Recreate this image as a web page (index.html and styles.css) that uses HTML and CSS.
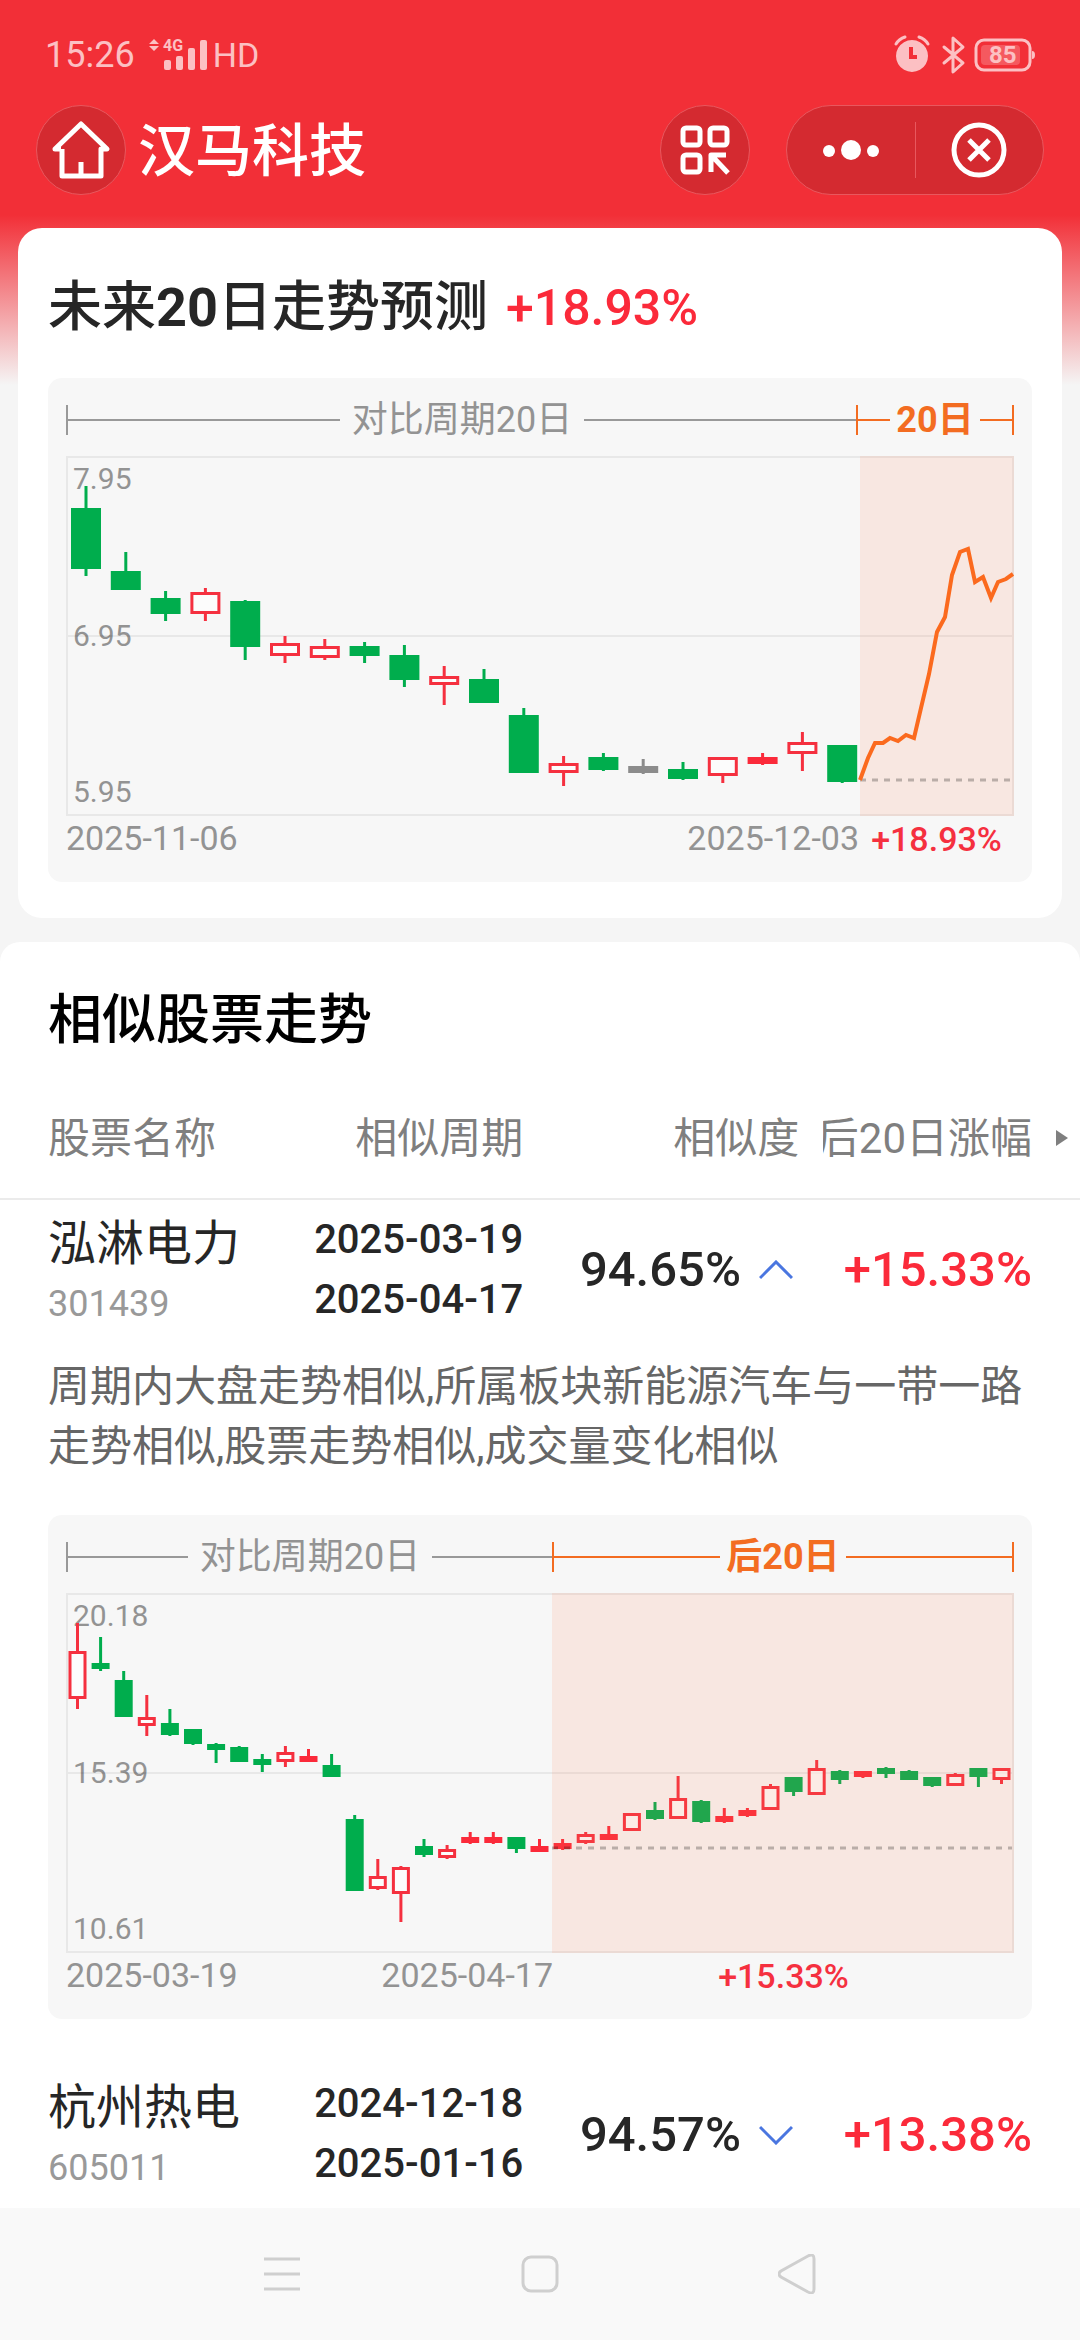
FILE: index.html
```html
<!DOCTYPE html>
<html lang="zh-CN">
  <head>
    <meta charset="UTF-8" />
    <meta name="viewport" content="width=device-width, initial-scale=1.0" />
    <title>汉马科技</title>
    <link rel="stylesheet" href="styles.css">
  </head>

  <body>
    <div class="status-bar">
      <span class="clock">15:26</span>
      <svg class="signal" width="60" height="42" viewBox="0 -4 60 42">
        <path d="M0 6 L5 1 L10 6 Z M0 8 H10 L5 13 Z" />
        <text x="14" y="13">4G</text>
        <rect x="15" y="22" width="7" height="10" rx="2" />
        <rect x="27" y="18" width="7" height="14" rx="2" />
        <rect x="39" y="10" width="7" height="22" rx="2" />
        <rect x="51" y="2" width="7" height="30" rx="2" />
      </svg>
      <span class="hd">HD</span>
      <svg class="status-icons" width="142" height="40" viewBox="0 0 142 40">
        <path fill-rule="evenodd" d="M18 5 a16 16 0 1 0 0.01 0 Z M15 12 H19 V20 H23 V24 H15 Z" />
        <path class="line" d="M2 9 Q5 4 11 2 M34 9 Q31 4 25 2" />
        <path class="line" d="M50 12 L69 28 L59 37 V3 L69 12 L50 28" />
        <rect class="line" x="82" y="5" width="54" height="30" rx="8" />
        <rect class="charge" x="87" y="10" width="39" height="20" rx="4" />
        <path d="M138 16 q3 0 3 4 q0 4 -3 4 Z" />
        <text x="95" y="28">85</text>
      </svg>
    </div>

    <header class="top-bar">
      <button class="round-button" aria-label="首页">
        <svg width="60" height="60" viewBox="0 0 60 60">
          <path d="M10 29 H4 L30 4 L56 29 H50 V56 H11 V29 M30 55 V42" />
        </svg>
      </button>
      <h1>汉马科技</h1>
      <button class="round-button scan" aria-label="扫码">
        <svg width="50" height="50" viewBox="0 0 50 50">
          <rect x="3" y="3" width="17" height="17" rx="3" />
          <rect x="30" y="3" width="17" height="17" rx="3" />
          <rect x="3" y="30" width="17" height="17" rx="3" />
          <path d="M31 47 V30 H46 M32 31 L48 48" />
        </svg>
      </button>
      <div class="capsule">
        <button aria-label="更多">
          <svg width="56" height="22" viewBox="0 0 56 22">
            <circle class="dot" cx="6" cy="12" r="6" />
            <circle class="dot" cx="28" cy="11" r="10" />
            <circle class="dot" cx="50" cy="12" r="6" />
          </svg>
        </button>
        <button aria-label="关闭">
          <svg width="56" height="56" viewBox="0 0 56 56">
            <circle cx="28" cy="28" r="25" />
            <path d="M18 18 L38 38 M38 18 L18 38" />
          </svg>
        </button>
      </div>
    </header>

    <main>
      <section class="card">
        <h2>
          <span>未来<b>20</b>日走势预测</span>
          <span class="rise">+18.93%</span>
        </h2>
        <div class="chart forecast">
          <div class="ranges">
            <div class="range before">对比周期20日</div>
            <div class="range after">20日</div>
          </div>
          <div class="plot">
            <div class="axis"><span>7.95</span><span>6.95</span><span>5.95</span></div>
            <svg id="forecast-plot" viewBox="0 0 948 360"></svg>
          </div>
          <div class="dates">
            <div class="before"><span>2025-11-06</span><span>2025-12-03</span></div>
            <div class="after">+18.93%</div>
          </div>
        </div>
      </section>

      <section class="similar">
        <h2>相似股票走势</h2>
        <table>
          <colgroup>
            <col class="col-name" />
            <col class="col-period" />
            <col class="col-score" />
            <col class="col-change" />
          </colgroup>
          <thead>
            <tr>
              <th>股票名称</th>
              <th>相似周期</th>
              <th>相似度</th>
              <th class="change-head">
                <div class="scroll-head">
                  <span class="clip"><span>后20日涨幅</span></span>
                  <i class="arrow"></i>
                </div>
              </th>
            </tr>
          </thead>
          <tbody>
            <tr class="stock">
              <td><div class="name">泓淋电力</div><div class="code">301439</div></td>
              <td class="period">2025-03-19<br />2025-04-17</td>
              <td class="score">
                94.65%
                <button class="toggle" aria-label="收起">
                  <svg width="34" height="20" viewBox="0 0 34 20"><path d="M1 18 L17 2 L33 18" /></svg>
                </button>
              </td>
              <td class="change rise">+15.33%</td>
            </tr>
            <tr>
              <td class="detail" colspan="4">
                <p>周期内大盘走势相似,所属板块新能源汽车与一带一路走势相似,股票走势相似,成交量变化相似</p>
                <div class="chart compare">
                  <div class="ranges">
                    <div class="range before">对比周期20日</div>
                    <div class="range after">后20日</div>
                  </div>
                  <div class="plot">
                    <div class="axis"><span>20.18</span><span>15.39</span><span>10.61</span></div>
                    <svg id="compare-plot" viewBox="0 0 948 360"></svg>
                  </div>
                  <div class="dates">
                    <div class="before"><span>2025-03-19</span><span>2025-04-17</span></div>
                    <div class="after">+15.33%</div>
                  </div>
                </div>
              </td>
            </tr>
            <tr class="stock">
              <td><div class="name">杭州热电</div><div class="code">605011</div></td>
              <td class="period">2024-12-18<br />2025-01-16</td>
              <td class="score">
                94.57%
                <button class="toggle" aria-label="展开">
                  <svg width="34" height="20" viewBox="0 0 34 20"><path d="M1 2 L17 18 L33 2" /></svg>
                </button>
              </td>
              <td class="change rise">+13.38%</td>
            </tr>
          </tbody>
        </table>
      </section>
    </main>

    <nav class="nav-bar">
      <button aria-label="菜单">
        <svg width="40" height="40" viewBox="0 0 40 40"><path d="M2 5 H38 M2 20 H38 M2 35 H38" /></svg>
      </button>
      <button aria-label="主屏幕">
        <svg width="40" height="40" viewBox="0 0 40 40"><rect x="3" y="3" width="34" height="34" rx="8" /></svg>
      </button>
      <button aria-label="返回">
        <svg width="40" height="40" viewBox="0 0 40 40">
          <path d="M30 2 Q36 -1 36 5 V35 Q36 41 30 38 L3 23 Q-1 20 3 17 Z" />
        </svg>
      </button>
    </nav>

    <script src="charts.js"></script>
  </body>
</html>
```

FILE: styles.css
```css
* {
  box-sizing: border-box;
}

body {
  margin: 0;
  height: 100vh;
  display: flex;
  flex-direction: column;
  overflow: hidden;
  font-family: Roboto, "Noto Sans CJK SC", sans-serif;
  color: #262626;
  background: linear-gradient(#f22f37 215px, #f5f5f5 385px);
}

h1,
h2,
p {
  margin: 0;
  font-weight: 500;
}

button {
  display: flex;
  align-items: center;
  justify-content: center;
  padding: 0;
  border: none;
  background: none;
  cursor: pointer;
}

svg {
  display: block;
}

.rise {
  color: #fb2a3a;
}

/* status bar */
.status-bar {
  display: flex;
  align-items: center;
  height: 105px;
  padding: 5px 44px 0 45px;
  font-size: 36px;
  color: #fcc0c3;
}

.status-bar svg {
  fill: #fcc0c3;
  overflow: visible;
}

.signal {
  margin-left: 14px;
}

.signal text {
  font-size: 16px;
  font-weight: 700;
}

.hd {
  margin-left: 4px;
  font-size: 34px;
}

.status-icons {
  margin-left: auto;
}

.status-icons .line {
  fill: none;
  stroke: #fcc0c3;
  stroke-width: 3;
  stroke-linejoin: round;
  stroke-linecap: round;
}

.status-icons .charge {
  fill: #f5595f;
}

.status-icons text {
  font-size: 24px;
  font-weight: 700;
}

/* title bar */
.top-bar {
  display: flex;
  align-items: center;
  height: 90px;
  margin-bottom: 33px;
  padding: 0 36px;
}

.top-bar h1 {
  margin-left: 12px;
  padding-top: 4px;
  font-size: 57px;
  line-height: 64px;
  color: #fff;
}

.top-bar svg {
  fill: none;
  stroke: #fff;
  stroke-width: 5;
  stroke-linejoin: round;
}

.top-bar .dot {
  fill: #fff;
  stroke: none;
}

.round-button {
  width: 90px;
  height: 90px;
  border: 1px solid #e8585e;
  border-radius: 50%;
  background: #d42a30;
}

.scan {
  margin-left: auto;
}

.capsule {
  display: flex;
  align-items: center;
  width: 258px;
  height: 90px;
  margin-left: 36px;
  border: 1px solid #e8585e;
  border-radius: 45px;
  background: #d42a30;
}

.capsule button {
  flex: 1;
  height: 56px;
}

.capsule button + button {
  border-left: 1px solid #e8585e;
}

main {
  flex: 1;
  min-height: 0;
  display: flex;
  flex-direction: column;
  overflow: hidden;
}

/* forecast card */
.card {
  margin: 0 18px 24px;
  padding: 48px 30px 36px;
  border-radius: 24px;
  background: #fff;
}

.card h2 {
  display: flex;
  align-items: center;
  gap: 18px;
  margin-bottom: 38px;
  font-size: 54px;
  line-height: 64px;
}

.card h2 .rise {
  font-size: 50px;
}

/* charts */
.chart {
  padding: 27px 18px 24px;
  border-radius: 14px;
  background: #f7f7f7;
  font-size: 34px;
  color: #939393;
}

.ranges {
  display: flex;
  height: 30px;
  margin-bottom: 21px;
  font-size: 36px;
  line-height: 30px;
}

.before {
  flex: 793;
}

.after {
  flex: 155;
}

.compare .before {
  flex: 487;
}

.compare .after {
  flex: 461;
}

.range {
  display: flex;
  align-items: center;
  gap: 12px;
  white-space: nowrap;
  border-left: 2px solid #999;
}

.range::before,
.range::after {
  content: "";
  flex: 1;
  height: 2px;
  background: #999;
}

.range.after {
  gap: 6px;
  font-weight: 700;
  color: #f36c21;
  border-left: 2px solid #f36c21;
  border-right: 2px solid #f36c21;
}

.range.after::before,
.range.after::after {
  background: #f36c21;
}

.plot {
  position: relative;
}

.plot svg {
  position: relative;
  width: 100%;
}

.axis {
  position: absolute;
  inset: 5px auto 6px 7px;
  display: flex;
  flex-direction: column;
  justify-content: space-between;
  font-size: 30px;
  line-height: 36px;
}

.grid {
  fill: none;
  stroke: #000;
  stroke-opacity: 0.06;
  stroke-width: 2;
}

.down {
  fill: #00ad4d;
  stroke: #00ad4d;
}

.up {
  fill: #fff;
  fill-opacity: 0.6;
  stroke: #f5303f;
}

.thin {
  fill: #fb2a3a;
  stroke: #fb2a3a;
}

.flat {
  fill: #8c8c8c;
  stroke: #8c8c8c;
}

.candle {
  stroke-width: 3;
}

.area {
  fill: #ff7f4c;
  fill-opacity: 0.13;
}

.base {
  stroke: #000;
  stroke-opacity: 0.25;
  stroke-width: 3;
  stroke-dasharray: 6 6;
}

.trend {
  fill: none;
  stroke: #fb6a1e;
  stroke-width: 4;
}

.dates {
  display: flex;
  height: 42px;
  line-height: 44px;
}

.dates .before {
  display: flex;
  justify-content: space-between;
}

.dates .after {
  text-align: center;
  line-height: 46px;
  font-weight: 500;
  color: #f5303f;
}

/* similar stocks */
.similar {
  flex: 1;
  padding-top: 49px;
  border-radius: 20px 20px 0 0;
  background: #fff;
}

.similar h2 {
  margin-bottom: 24px;
  padding-left: 48px;
  font-size: 54px;
  line-height: 60px;
  color: #000;
}

table {
  width: 100%;
  table-layout: fixed;
  border-collapse: collapse;
}

.col-name {
  width: 28%;
}

.col-period {
  width: 21%;
}

.col-score {
  width: 25%;
}

.col-change {
  width: 26%;
}

th,
td {
  padding: 0;
  text-align: right;
}

th:first-child,
td:first-child {
  padding-left: 48px;
  text-align: left;
}

th {
  height: 124px;
  padding-bottom: 4px;
  border-bottom: 2px solid #ebebeb;
  font-size: 42px;
  font-weight: 400;
  color: #7f7f7f;
  white-space: nowrap;
}

th:nth-child(2),
.period {
  padding-right: 6px;
}

.scroll-head {
  display: flex;
  align-items: center;
  gap: 24px;
  padding: 0 12px 0 24px;
}

.clip {
  flex: 1;
  min-width: 0;
  display: flex;
  justify-content: flex-end;
  overflow: hidden;
}

.arrow {
  margin-top: 6px;
  border-left: 12px solid #7f7f7f;
  border-top: 8px solid transparent;
  border-bottom: 8px solid transparent;
}

.stock td {
  height: 140px;
}

.name {
  padding-top: 4px;
  font-size: 48px;
  line-height: 64px;
}

.code {
  font-size: 36px;
  line-height: 56px;
  color: #999;
}

.period {
  font-size: 40px;
  font-weight: 500;
  line-height: 60px;
}

.score,
.change {
  font-size: 49px;
  font-weight: 500;
  white-space: nowrap;
}

.score {
  padding-right: 6px;
}

.stock .change {
  padding-right: 48px;
}

.toggle {
  display: inline-flex;
  margin-left: 6px;
  height: 40px;
  padding-bottom: 6px;
  vertical-align: middle;
}

.toggle path {
  fill: none;
  stroke: #4a76e0;
  stroke-width: 3;
}

.stock + tr .detail {
  padding: 18px 48px 45px;
}

.detail p {
  margin-bottom: 38px;
  font-size: 42px;
  font-weight: 400;
  line-height: 60px;
  color: #666;
}

/* system navigation */
.nav-bar {
  display: flex;
  align-items: center;
  justify-content: space-around;
  height: 132px;
  padding: 0 153px;
  background: #f9f9f9;
}

.nav-bar svg {
  fill: none;
  stroke: #cfcfcf;
  stroke-width: 3;
}
```

FILE: charts.js
```js
// each candle: [high, body top, body bottom, low, kind]
const forecast = [
  [30, 52, 113, 120, "down"],
  [96, 115, 134, 134, "down"],
  [135, 142, 158, 165, "down"],
  [132, 136, 158, 165, "up"],
  [144, 145, 191, 204, "down"],
  [180, 187, 200, 207, "up"],
  [183, 190, 202, 204, "up"],
  [186, 190, 200, 207, "down"],
  [189, 199, 224, 231, "down"],
  [210, 220, 229, 249, "up"],
  [213, 223, 247, 247, "down"],
  [252, 259, 317, 317, "down"],
  [300, 307, 317, 330, "up"],
  [297, 301, 314, 315, "down"],
  [303, 310, 317, 318, "flat"],
  [306, 313, 323, 324, "down"],
  [301, 301, 320, 327, "up"],
  [297, 301, 308, 309, "thin"],
  [276, 286, 298, 315, "up"],
  [289, 289, 326, 327, "down"],
];

const compare = [
  [30, 58, 106, 116, "up"],
  [44, 70, 76, 78, "down"],
  [78, 87, 124, 124, "down"],
  [102, 124, 133, 143, "up"],
  [116, 130, 142, 143, "down"],
  [136, 136, 151, 152, "down"],
  [150, 151, 157, 170, "down"],
  [153, 154, 169, 169, "down"],
  [161, 166, 172, 179, "down"],
  [153, 159, 169, 174, "up"],
  [156, 163, 169, 169, "thin"],
  [161, 172, 184, 184, "down"],
  [222, 226, 298, 298, "down"],
  [266, 283, 296, 297, "up"],
  [273, 274, 301, 329, "up"],
  [246, 253, 262, 264, "down"],
  [252, 256, 265, 266, "up"],
  [239, 244, 250, 251, "thin"],
  [239, 244, 250, 251, "thin"],
  [244, 244, 256, 260, "down"],
  [246, 253, 259, 259, "thin"],
  [246, 250, 256, 257, "thin"],
  [239, 241, 250, 251, "up"],
  [233, 241, 247, 247, "thin"],
  [220, 220, 238, 238, "up"],
  [209, 217, 226, 227, "down"],
  [183, 205, 226, 226, "up"],
  [207, 208, 229, 230, "down"],
  [215, 223, 229, 230, "thin"],
  [215, 217, 223, 224, "thin"],
  [191, 193, 217, 217, "up"],
  [184, 184, 199, 203, "down"],
  [167, 175, 202, 202, "up"],
  [177, 178, 187, 191, "down"],
  [178, 178, 184, 185, "thin"],
  [174, 175, 181, 185, "down"],
  [177, 178, 187, 187, "down"],
  [184, 184, 193, 194, "down"],
  [180, 181, 193, 193, "up"],
  [175, 175, 184, 194, "down"],
  [175, 175, 187, 191, "up"],
];

const trend =
  "794,324 802,302 809,287 817,287 824,282 832,285 840,279 848,282 855,252 863,218 871,176 " +
  "879,161 886,119 894,96 902,93 909,126 917,121 925,142 932,126 940,123 947,118";

function candles(data, first, step, width) {
  return data
    .map(([high, top, bottom, low, kind], i) => {
      const x = first + step * i;
      return `<g class="candle ${kind}">
        <path d="M${x} ${high} V${top} M${x} ${bottom} V${low}" />
        <rect x="${x - width / 2 + 1.5}" y="${top + 1.5}" width="${width - 3}" height="${bottom - top - 3}" />
      </g>`;
    })
    .join("");
}

function draw(id, body, split, base, line) {
  document.getElementById(id).innerHTML = `
    <path class="grid" d="M1 1 H947 V359 H1 Z M1 180 H947" />
    ${body}
    <rect class="area" x="${split}" y="0" width="${948 - split}" height="360" />
    <path class="base" d="M${split} ${base} H946" />
    ${line ? `<polyline class="trend" points="${line}" />` : ""}`;
}

draw("forecast-plot", candles(forecast, 20, 39.8, 30), 794, 324, trend);
draw("compare-plot", candles(compare, 11.5, 23.1, 18), 486, 255);
```
